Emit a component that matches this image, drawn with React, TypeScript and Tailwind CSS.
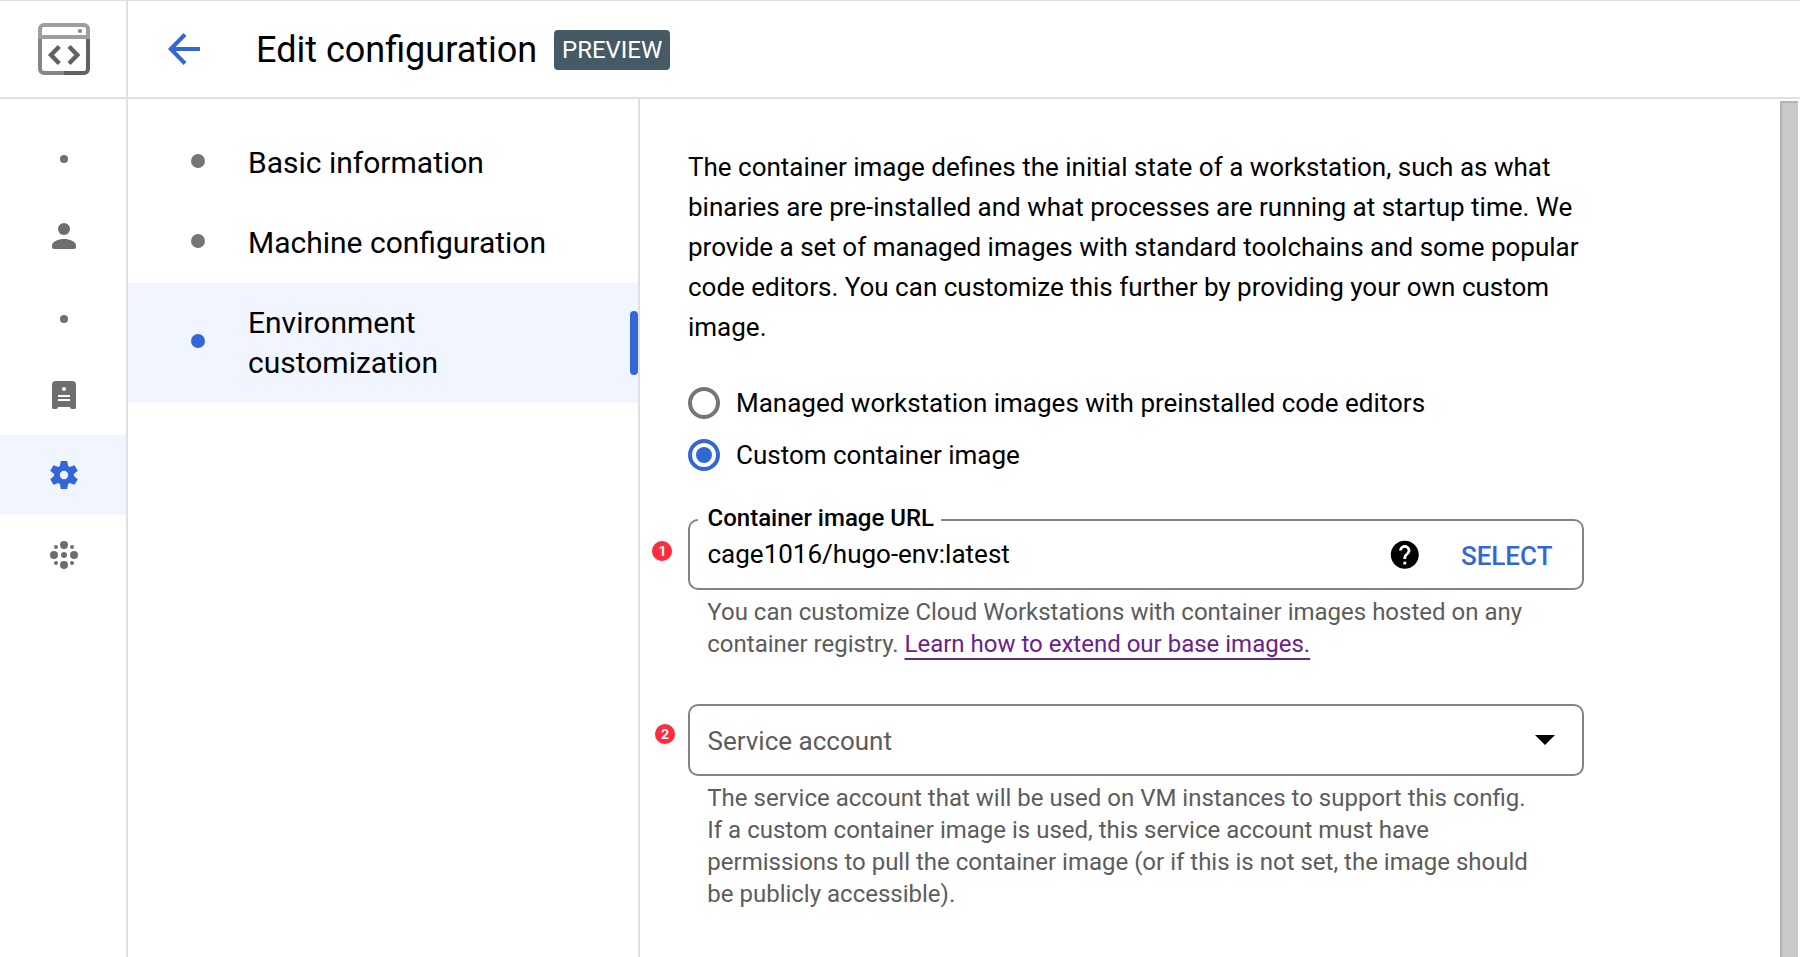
import type { ReactNode } from "react";
import { MdHelp } from "react-icons/md";

function LogoIcon() {
  return (
    <svg width="52" height="52" viewBox="0 0 52 52" fill="none">
      <path d="M6 2H46A4 4 0 0 1 50 6V16H2V6A4 4 0 0 1 6 2Z" fill="#fff" />
      <path d="M2 14V46A4 4 0 0 0 6 50H27" stroke="#848688" strokeWidth="4" />
      <path d="M26 50H46A4 4 0 0 0 50 46V14" stroke="#5f6163" strokeWidth="4" />
      <path d="M2 16V6A4 4 0 0 1 6 2H46A4 4 0 0 1 50 6V14H2" stroke="#9d9ea1" strokeWidth="4" />
      <circle cx="42" cy="8" r="2.1" fill="#848688" />
      <path d="M21.3 23.5L13 32L21.3 40.5" stroke="#5f6163" strokeWidth="4.4" />
      <path d="M31 23.5L39.3 32L31 40.5" stroke="#5f6163" strokeWidth="4.4" />
    </svg>
  );
}

function BackIcon() {
  return (
    <svg width="32" height="32" viewBox="0 0 32 32" fill="none" stroke="#3367d6" strokeWidth="4">
      <path d="M17 1.5L2.8 16L17 30.5" />
      <path d="M2.8 16H32" />
    </svg>
  );
}

function DotIcon() {
  return (
    <svg width="8" height="8" viewBox="0 0 8 8" className="mt-2">
      <circle cx="4" cy="4" r="4" fill="#6e6e6e" />
    </svg>
  );
}

function PersonIcon() {
  return (
    <svg width="24" height="26" viewBox="0 0 24 26" fill="#6e6e6e" className="mt-0.5">
      <circle cx="12" cy="6" r="6" />
      <path d="M0 24V22.5C0 18.6 6.5 16 12 16S24 18.6 24 22.5V24A2 2 0 0 1 22 26H2A2 2 0 0 1 0 24Z" />
    </svg>
  );
}

function ServerIcon() {
  return (
    <svg width="24" height="28" viewBox="0 0 24 28">
      <path
        d="M4 0H20A4 4 0 0 1 24 4V26.5A1.5 1.5 0 0 1 22.5 28H20A2 2 0 0 1 18 26H6A2 2 0 0 1 4 28H1.5A1.5 1.5 0 0 1 0 26.5V4A4 4 0 0 1 4 0Z"
        fill="#6e6e6e"
      />
      <circle cx="12" cy="8" r="2.1" fill="#fff" />
      <path d="M6 15H18M6 19H18" stroke="#fff" strokeWidth="2" />
    </svg>
  );
}

function GearIcon() {
  const tooth = "M-3.2 -14H3.2L4.3 -8V8L3.2 14H-3.2L-4.3 8V-8Z";
  return (
    <svg width="28" height="28" viewBox="-14 -14 28 28" fill="#3367d6">
      <circle r="10" />
      <path d={tooth} />
      <path d={tooth} transform="rotate(60)" />
      <path d={tooth} transform="rotate(120)" />
      <circle r="4.2" fill="#f0f5ff" />
    </svg>
  );
}

function ClusterIcon() {
  return (
    <svg width="28" height="28" viewBox="-14 -14 28 28" fill="#6e6e6e">
      <circle r="3" />
      <circle cy="-10" r="4" />
      <circle cy="10" r="4" />
      <circle cx="-10" r="4" />
      <circle cx="10" r="4" />
      <circle cx="-8" cy="-8" r="2" />
      <circle cx="8" cy="-8" r="2" />
      <circle cx="-8" cy="8" r="2" />
      <circle cx="8" cy="8" r="2" />
    </svg>
  );
}

function RailItem({ active, children }: { active?: boolean; children: ReactNode }) {
  return (
    <div className={`flex h-20 items-center justify-center pl-0.5 ${active ? "bg-[#f0f5ff]" : ""}`}>
      {children}
    </div>
  );
}

function Step({ active, children }: { active?: boolean; children: ReactNode }) {
  return (
    <li
      className={`flex items-center py-5 pl-[63px] text-[30px] leading-10 ${active ? "bg-[#f0f5ff]" : ""}`}
    >
      <span className={`mb-1 size-3.5 shrink-0 rounded-full ${active ? "bg-[#3367d6]" : "bg-[#757575]"}`} />
      <span className="ml-[43px] w-[340px]">{children}</span>
      {active && <span className="ml-auto h-16 w-2 rounded bg-[#3367d6]" />}
    </li>
  );
}

function Radio({ checked, children }: { checked?: boolean; children: ReactNode }) {
  return (
    <label className="flex h-[52px] items-center gap-4 text-[26px]">
      <span
        className={`flex size-8 items-center justify-center rounded-full border-4 ${
          checked ? "border-[#3367d6]" : "border-[#757575]"
        }`}
      >
        {checked && <span className="size-4 rounded-full bg-[#3367d6]" />}
      </span>
      {children}
    </label>
  );
}

function Marker({ className, children }: { className: string; children: ReactNode }) {
  return (
    <span
      className={`absolute flex size-5 items-center justify-center rounded-full bg-[#fb2c3e] font-['Inter',sans-serif] text-[13px] leading-none font-bold text-white shadow-sm ${className}`}
    >
      {children}
    </span>
  );
}

export default function App() {
  return (
    <div className="flex h-[957px] w-[1800px] flex-col overflow-hidden border-t border-[#e0e0e0] bg-white font-['Roboto',sans-serif] text-black">
      <header className="flex h-[98px] shrink-0 border-b-2 border-[#e0e0e0]">
        <div className="flex w-32 items-center border-r-2 border-[#e0e0e0] pl-[38px]">
          <LogoIcon />
        </div>
        <div className="flex items-center pl-10">
          <BackIcon />
          <h1 className="mt-0.5 ml-14 text-4xl leading-10">Edit configuration</h1>
          <span className="mt-0.5 ml-[17px] h-10 rounded bg-[#455a64] px-[7.8px] text-2xl leading-10 text-white">
            PREVIEW
          </span>
        </div>
      </header>

      <div className="flex min-h-0 flex-1">
        <nav className="w-32 shrink-0 border-r-2 border-[#e0e0e0] pt-4">
          <RailItem>
            <DotIcon />
          </RailItem>
          <RailItem>
            <PersonIcon />
          </RailItem>
          <RailItem>
            <DotIcon />
          </RailItem>
          <RailItem>
            <ServerIcon />
          </RailItem>
          <RailItem active>
            <GearIcon />
          </RailItem>
          <RailItem>
            <ClusterIcon />
          </RailItem>
        </nav>

        <ul className="w-[512px] shrink-0 border-r-2 border-[#e0e0e0] pt-6">
          <Step>Basic information</Step>
          <Step>Machine configuration</Step>
          <Step active>
            Environment
            <br />
            customization
          </Step>
        </ul>

        <main className="min-w-0 flex-1 pt-12 pl-12">
          <p className="w-[896px] text-[26px] leading-10">
            The container image defines the initial state of a workstation, such as what
            binaries are pre-installed and what processes are running at startup time. We
            provide a set of managed images with standard toolchains and some popular code
            editors. You can customize this further by providing your own custom image.
          </p>

          <div className="mt-[30px]">
            <Radio>Managed workstation images with preinstalled code editors</Radio>
            <Radio checked>Custom container image</Radio>
          </div>

          <div className="relative mt-[38px] flex h-[71px] w-[896px] items-center pl-[19.5px] text-[26px]">
            <div className="absolute inset-0 flex">
              <div className="w-[9.5px] rounded-l-[10px] border-y-2 border-l-2 border-[#838383]" />
              <div className="w-[243.5px] border-b-2 border-[#838383]" />
              <div className="flex-1 rounded-r-[10px] border-y-2 border-r-2 border-[#838383]" />
            </div>
            <label className="absolute -top-[13px] left-[19.5px] text-2xl leading-6 font-medium">
              Container image URL
            </label>
            <span className="relative mb-0.5 leading-7">cage1016/hugo-env:latest</span>
            <MdHelp size={33.6} className="relative ml-auto" />
            <button className="relative mt-[3px] mr-[31.5px] ml-[39.2px] font-medium text-[#3367d6]">
              SELECT
            </button>
            <Marker className="top-[22px] -left-9">1</Marker>
          </div>
          <p className="mt-1.5 ml-[19.3px] w-[830px] text-2xl leading-8 text-[#5c5c5c]">
            You can customize Cloud Workstations with container images hosted on any
            <br />
            container registry.{" "}
            <a className="text-[#6a2090] underline decoration-[#5f2d87] decoration-2 underline-offset-[6px] [text-decoration-skip-ink:none]">
              Learn how to extend our base images.
            </a>
          </p>

          <div className="relative mt-11 flex h-[72px] w-[896px] items-center justify-between rounded-[10px] border-2 border-[#838383] pr-[27px] pl-[17.5px] text-[26px] text-[#5c5c5c]">
            <span className="mt-0.5">Service account</span>
            <svg width="20" height="10" viewBox="0 0 20 10">
              <path d="M0 0H20L10 10Z" fill="#000" />
            </svg>
            <Marker className="top-[18px] -left-[35px]">2</Marker>
          </div>
          <p className="mt-1.5 ml-[19.3px] w-[830px] text-2xl leading-8 text-[#5c5c5c]">
            The service account that will be used on VM instances to support this config.
            <br />
            If a custom container image is used, this service account must have
            <br />
            permissions to pull the container image (or if this is not set, the image should
            <br />
            be publicly accessible).
          </p>
        </main>

        <div className="mt-0.5 mr-0.5 w-[18px] shrink-0 border-t-2 border-l-2 border-[#b3b3b3] bg-[#c9c9c9]" />
      </div>
    </div>
  );
}
